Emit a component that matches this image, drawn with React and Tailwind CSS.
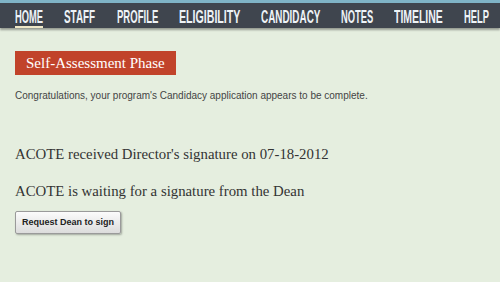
export default function App() {
  const items = [
    { t: "Home", w: "w-[28px]", s: "scale-x-[0.52]" },
    { t: "Staff", w: "w-[32px]", s: "scale-x-[0.55]" },
    { t: "Profile", w: "w-[41px]", s: "scale-x-[0.53]" },
    { t: "Eligibility", w: "w-[61px]", s: "scale-x-[0.59]" },
    { t: "Candidacy", w: "w-[59px]", s: "scale-x-[0.55]" },
    { t: "Notes", w: "w-[32px]", s: "scale-x-[0.52]" },
    { t: "Timeline", w: "w-[49px]", s: "scale-x-[0.58]" },
    { t: "Help", w: "w-[25px]", s: "scale-x-[0.52]" },
  ];
  return (
    <div className="w-[500px] h-[282px] overflow-hidden bg-[#e5eedf] relative">
      <div className="border-t-[3px] border-[#7fb3c6] bg-[#3f454e] h-[28px] shadow-[0_2px_2px_rgba(0,0,0,0.35)] flex items-start pl-[15px] gap-[21px]">
        {items.map((it, i) => (
          <div
            key={it.t}
            className={`${it.w} h-full pt-[5px] ${i === 0 ? "border-b-[2px] border-[#efe8c8]" : ""}`}
          >
            <span
              className={`block whitespace-nowrap origin-left ${it.s} uppercase text-[#eef3f7] text-[18px] leading-[18px] font-bold [font-family:'Liberation_Sans',Arial,sans-serif]`}
            >
              {it.t}
            </span>
          </div>
        ))}
      </div>
      <div className="px-[15px]">
        <div className="mt-[23px] inline-block bg-[#c1432a] text-white px-[11px] h-[24px] leading-[24px] text-[15px] [font-family:'Liberation_Serif',serif]">
          Self-Assessment Phase
        </div>
        <p className="mt-[15px] text-[10px] leading-[12px] text-[#444] [font-family:'Liberation_Sans',Arial,sans-serif]">
          Congratulations, your program's Candidacy application appears to be complete.
        </p>
        <p className="mt-[44px] text-[14.8px] leading-[16px] text-[#333] [font-family:'Liberation_Serif',Georgia,serif]">
          ACOTE received Director's signature on 07-18-2012
        </p>
        <p className="mt-[21px] text-[14.8px] leading-[16px] text-[#333] [font-family:'Liberation_Serif',Georgia,serif]">
          ACOTE is waiting for a signature from the Dean
        </p>
        <button className="mt-[12px] w-[106px] h-[23px] rounded-[2px] border border-[#9a9a9a] bg-gradient-to-b from-[#fbfbfb] to-[#dcdcdc] shadow-[1px_1px_2px_rgba(0,0,0,0.3)] text-[9px] font-bold text-[#222] [font-family:'Liberation_Sans',Arial,sans-serif]">
          Request Dean to sign
        </button>
      </div>
    </div>
  );
}
